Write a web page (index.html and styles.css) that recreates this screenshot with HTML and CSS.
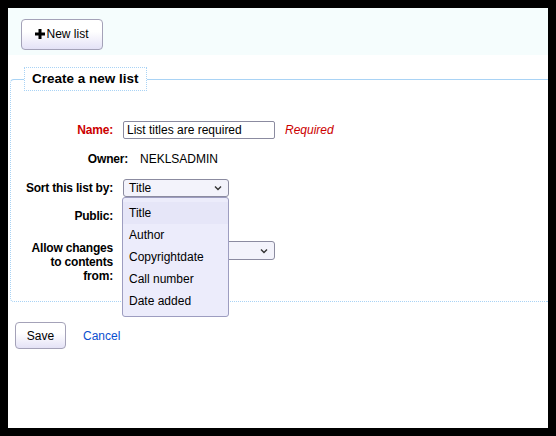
FILE: index.html
```html
<!DOCTYPE html>
<html>
<head>
<meta charset="utf-8">
<link rel="stylesheet" href="styles.css">
</head>
<body>
<div class="page">
  <div class="toolbar">
    <button class="btn btn-new"><svg class="plus" width="10" height="10" viewBox="0 0 10 10"><path d="M3.5 0h3v3.5H10v3H6.5V10h-3V6.5H0v-3h3.5z" fill="#000"/></svg>New list</button>
  </div>
  <form class="form">
    <fieldset class="box">
      <legend class="legend">Create a new list</legend>
      <div class="row row-name">
        <label class="lbl lbl-req">Name:</label>
        <input class="txt" type="text" value="List titles are required">
        <span class="required">Required</span>
      </div>
      <div class="row row-owner">
        <span class="lbl lbl-owner">Owner:</span>
        <span class="val">NEKLSADMIN</span>
      </div>
      <div class="row row-sort">
        <label class="lbl">Sort this list by:</label>
        <div class="selwrap">
          <div class="sel sel-sort focused"><span>Title</span><svg class="chev" width="8" height="6" viewBox="0 0 8 6"><path d="M1 1.5l3 3 3-3" stroke="#333" stroke-width="1.4" fill="none"/></svg></div>
          <ul class="dropdown">
            <li class="opt sel-opt">Title</li>
            <li class="opt">Author</li>
            <li class="opt">Copyrightdate</li>
            <li class="opt">Call number</li>
            <li class="opt">Date added</li>
          </ul>
        </div>
      </div>
      <div class="row row-public">
        <label class="lbl">Public:</label>
        <div class="sel sel-public"><span class="hidden-val">No</span><svg class="chev" width="8" height="6" viewBox="0 0 8 6"><path d="M1 1.5l3 3 3-3" stroke="#333" stroke-width="1.4" fill="none"/></svg></div>
      </div>
      <div class="row row-allow">
        <label class="lbl lbl-multi">Allow changes<br>to contents<br>from:</label>
        <div class="sel sel-allow"><span class="hidden-val">Nobody</span><svg class="chev" width="8" height="6" viewBox="0 0 8 6"><path d="M1 1.5l3 3 3-3" stroke="#333" stroke-width="1.4" fill="none"/></svg></div>
      </div>
    </fieldset>
    <div class="actions">
      <button class="btn btn-save" type="button">Save</button>
      <a class="cancel" href="#">Cancel</a>
    </div>
  </form>
</div>
</body>
</html>
```
FILE: styles.css
```css
html { background: #000; }
body { margin: 0; font-family: "Liberation Sans", Arial, sans-serif; font-size: 12px; color: #000; }
.page {
  margin: 8px;
  width: 540px;
  height: 420px;
  background: #fff;
  overflow: hidden;
}
.toolbar {
  height: 47px;
  background: #f5fdfd;
  padding: 11px 0 0 13px;
  box-sizing: border-box;
}
.btn {
  font-family: "Liberation Sans", Arial, sans-serif;
  font-size: 12px;
  color: #000;
  border: 1px solid #a4a2b8;
  border-radius: 4px;
  background: linear-gradient(#ffffff 0%, #ffffff 40%, #e4e2f6 100%);
  padding: 0;
  box-sizing: border-box;
  display: inline-flex;
  align-items: center;
  justify-content: center;
}
.btn-new { width: 82px; height: 31px; gap: 1px; padding-bottom: 1px; }
.plus { display: block; }
.form { margin: 0; }
.box {
  margin: 12px 0 0 2px;
  padding: 0 0 18px 0;
  border: 1px dotted #a9d3f5;
  border-top: 1px solid #a9d3f5;
  border-right: none;
  border-radius: 4px 0 0 4px;
  min-width: 0;
}
.legend {
  margin-left: 13px;
  padding: 0 7px;
  height: 24px;
  line-height: 22px;
  box-sizing: border-box;
  border: 1px dotted #a9d3f5;
  font-weight: bold;
  font-size: 13.5px;
  background: #fff;
}
.row { display: flex; align-items: flex-start; }
.row-name { margin-top: 30px; height: 18px; }
.row-owner { margin-top: 10px; height: 20px; }
.row-sort { margin-top: 10px; height: 18px; }
.row-public { margin-top: 10px; height: 18px; }
.row-allow { margin-top: 16px; }
.lbl {
  width: 102px;
  text-align: right;
  font-weight: bold;
  line-height: 18px;
  margin-right: 10px;
  flex: none;
  letter-spacing: -0.2px;
}
.lbl-req { color: #cc0000; }
.lbl-owner { width: 117px; margin-right: 12px; line-height: 20px; }
.val { line-height: 20px; }
.lbl-multi { line-height: 14px; }
.txt {
  width: 152px;
  height: 18px;
  box-sizing: border-box;
  border: 1px solid #8b8ba0;
  border-radius: 2px;
  padding: 0 3px;
  font-family: "Liberation Sans", Arial, sans-serif;
  font-size: 12px;
  color: #000;
  margin: 0;
}
.required { color: #cc0000; font-style: italic; margin-left: 10px; line-height: 18px; }
.selwrap { position: relative; }
.sel {
  height: 18px;
  box-sizing: border-box;
  border: 1px solid #8b8ba0;
  border-radius: 3px;
  background: #f3f3fb;
  display: flex;
  align-items: center;
  justify-content: space-between;
  padding: 0 6px 0 5px;
}
.hidden-val { visibility: hidden; }
.sel-sort { width: 106px; }
.sel-public { width: 106px; }
.sel-allow { width: 152px; height: 19px; }
.chev { display: block; }
.dropdown {
  position: absolute;
  top: 18px;
  left: -1px;
  width: 107px;
  margin: 0;
  padding: 4px 0;
  list-style: none;
  box-sizing: border-box;
  border: 1px solid #9d9dc0;
  border-radius: 3px;
  background: #ececfb;
  z-index: 2;
}
.opt { height: 22px; line-height: 22px; padding-left: 6px; }
.sel-opt { background: #e6e6f8; }
.actions {
  display: flex;
  align-items: center;
  margin-top: 20px;
  padding-left: 7px;
  gap: 17px;
}
.btn-save { width: 51px; height: 27px; }
.cancel { color: #0a4fd0; text-decoration: none; }
```
